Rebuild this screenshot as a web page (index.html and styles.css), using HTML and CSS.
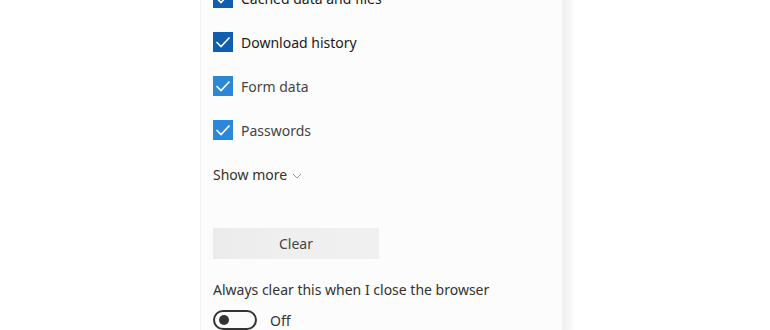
FILE: index.html
```html
<!DOCTYPE html>
<html>
<head>
<meta charset="utf-8">
<link rel="stylesheet" href="styles.css">
</head>
<body>
<div class="page">
  <div class="panel">
    <ul class="checks">
      <li class="row"><span class="box dark"><svg viewBox="0 0 20 20"><path d="M3.5 10 L8 14.5 L16.5 5.5" /></svg></span><span class="label strong">Cached data and files</span></li>
      <li class="row"><span class="box dark"><svg viewBox="0 0 20 20"><path d="M3.5 10 L8 14.5 L16.5 5.5" /></svg></span><span class="label strong">Download history</span></li>
      <li class="row"><span class="box"><svg viewBox="0 0 20 20"><path d="M3.5 10 L8 14.5 L16.5 5.5" /></svg></span><span class="label">Form data</span></li>
      <li class="row"><span class="box"><svg viewBox="0 0 20 20"><path d="M3.5 10 L8 14.5 L16.5 5.5" /></svg></span><span class="label">Passwords</span></li>
    </ul>
    <div class="more">Show more <svg class="chev" viewBox="0 0 10 6"><path d="M1 1 L5 5 L9 1"/></svg></div>
    <button class="clear">Clear</button>
    <div class="always">Always clear this when I close the browser</div>
    <div class="toggle-row"><span class="toggle"><span class="knob"></span></span><span class="off">Off</span></div>
  </div>
  <div class="shadow"></div>
</div>
</body>
</html>
```
FILE: styles.css
```css
html, body {
  margin: 0;
  padding: 0;
  background: #ffffff;
  overflow: hidden;
  width: 770px;
  height: 330px;
}
.page {
  display: flex;
  height: 330px;
  padding-left: 200px;
  font-family: "Noto Sans", "Open Sans", sans-serif;
  font-size: 14px;
  color: #333;
}
.panel {
  width: 349px;
  padding-left: 12px;
  background: #fcfcfc;
  border-left: 1px solid #f3f3f3;
  display: flex;
  flex-direction: column;
}
.shadow {
  width: 12px;
  background: linear-gradient(to right, #f0f0f0, #f6f6f6 60%, #fdfdfd);
}
.checks {
  list-style: none;
  margin: -24px 0 0 0;
  padding: 0;
}
.row {
  height: 44px;
  display: flex;
  align-items: center;
  gap: 8px;
}
.box {
  width: 20px;
  height: 20px;
  background: #2b88d8;
  display: flex;
}
.box.dark {
  background: #0f5eaf;
}
.box svg {
  width: 20px;
  height: 20px;
  fill: none;
  stroke: #fff;
  stroke-width: 1.6;
}
.label {
  color: #444;
}
.label.strong {
  color: #1b1b1b;
}
.more {
  height: 45px;
  display: flex;
  align-items: center;
  margin-top: 1px;
  color: #3a2f2a;
  gap: 5px;
}
.chev {
  width: 10px;
  height: 6px;
  fill: none;
  stroke: #999;
  stroke-width: 1;
  margin-top: 2px;
}
.clear {
  margin-top: 31px;
  width: 166px;
  height: 32px;
  border: none;
  background: linear-gradient(to right, #ebebeb, #efefef 40%, #f0f0f0);
  font-family: inherit;
  font-size: 14px;
  color: #444;
  padding: 0;
}
.always {
  margin-top: 21px;
  height: 20px;
  line-height: 20px;
  color: #333;
}
.toggle-row {
  margin-top: 10px;
  display: flex;
  align-items: center;
  gap: 13px;
}
.toggle {
  box-sizing: border-box;
  width: 44px;
  height: 20px;
  border: 2px solid #333;
  border-radius: 10px;
  display: flex;
  align-items: center;
  padding-left: 4px;
}
.knob {
  width: 10px;
  height: 10px;
  border-radius: 50%;
  background: #333;
}
.off {
  color: #333;
}
```
